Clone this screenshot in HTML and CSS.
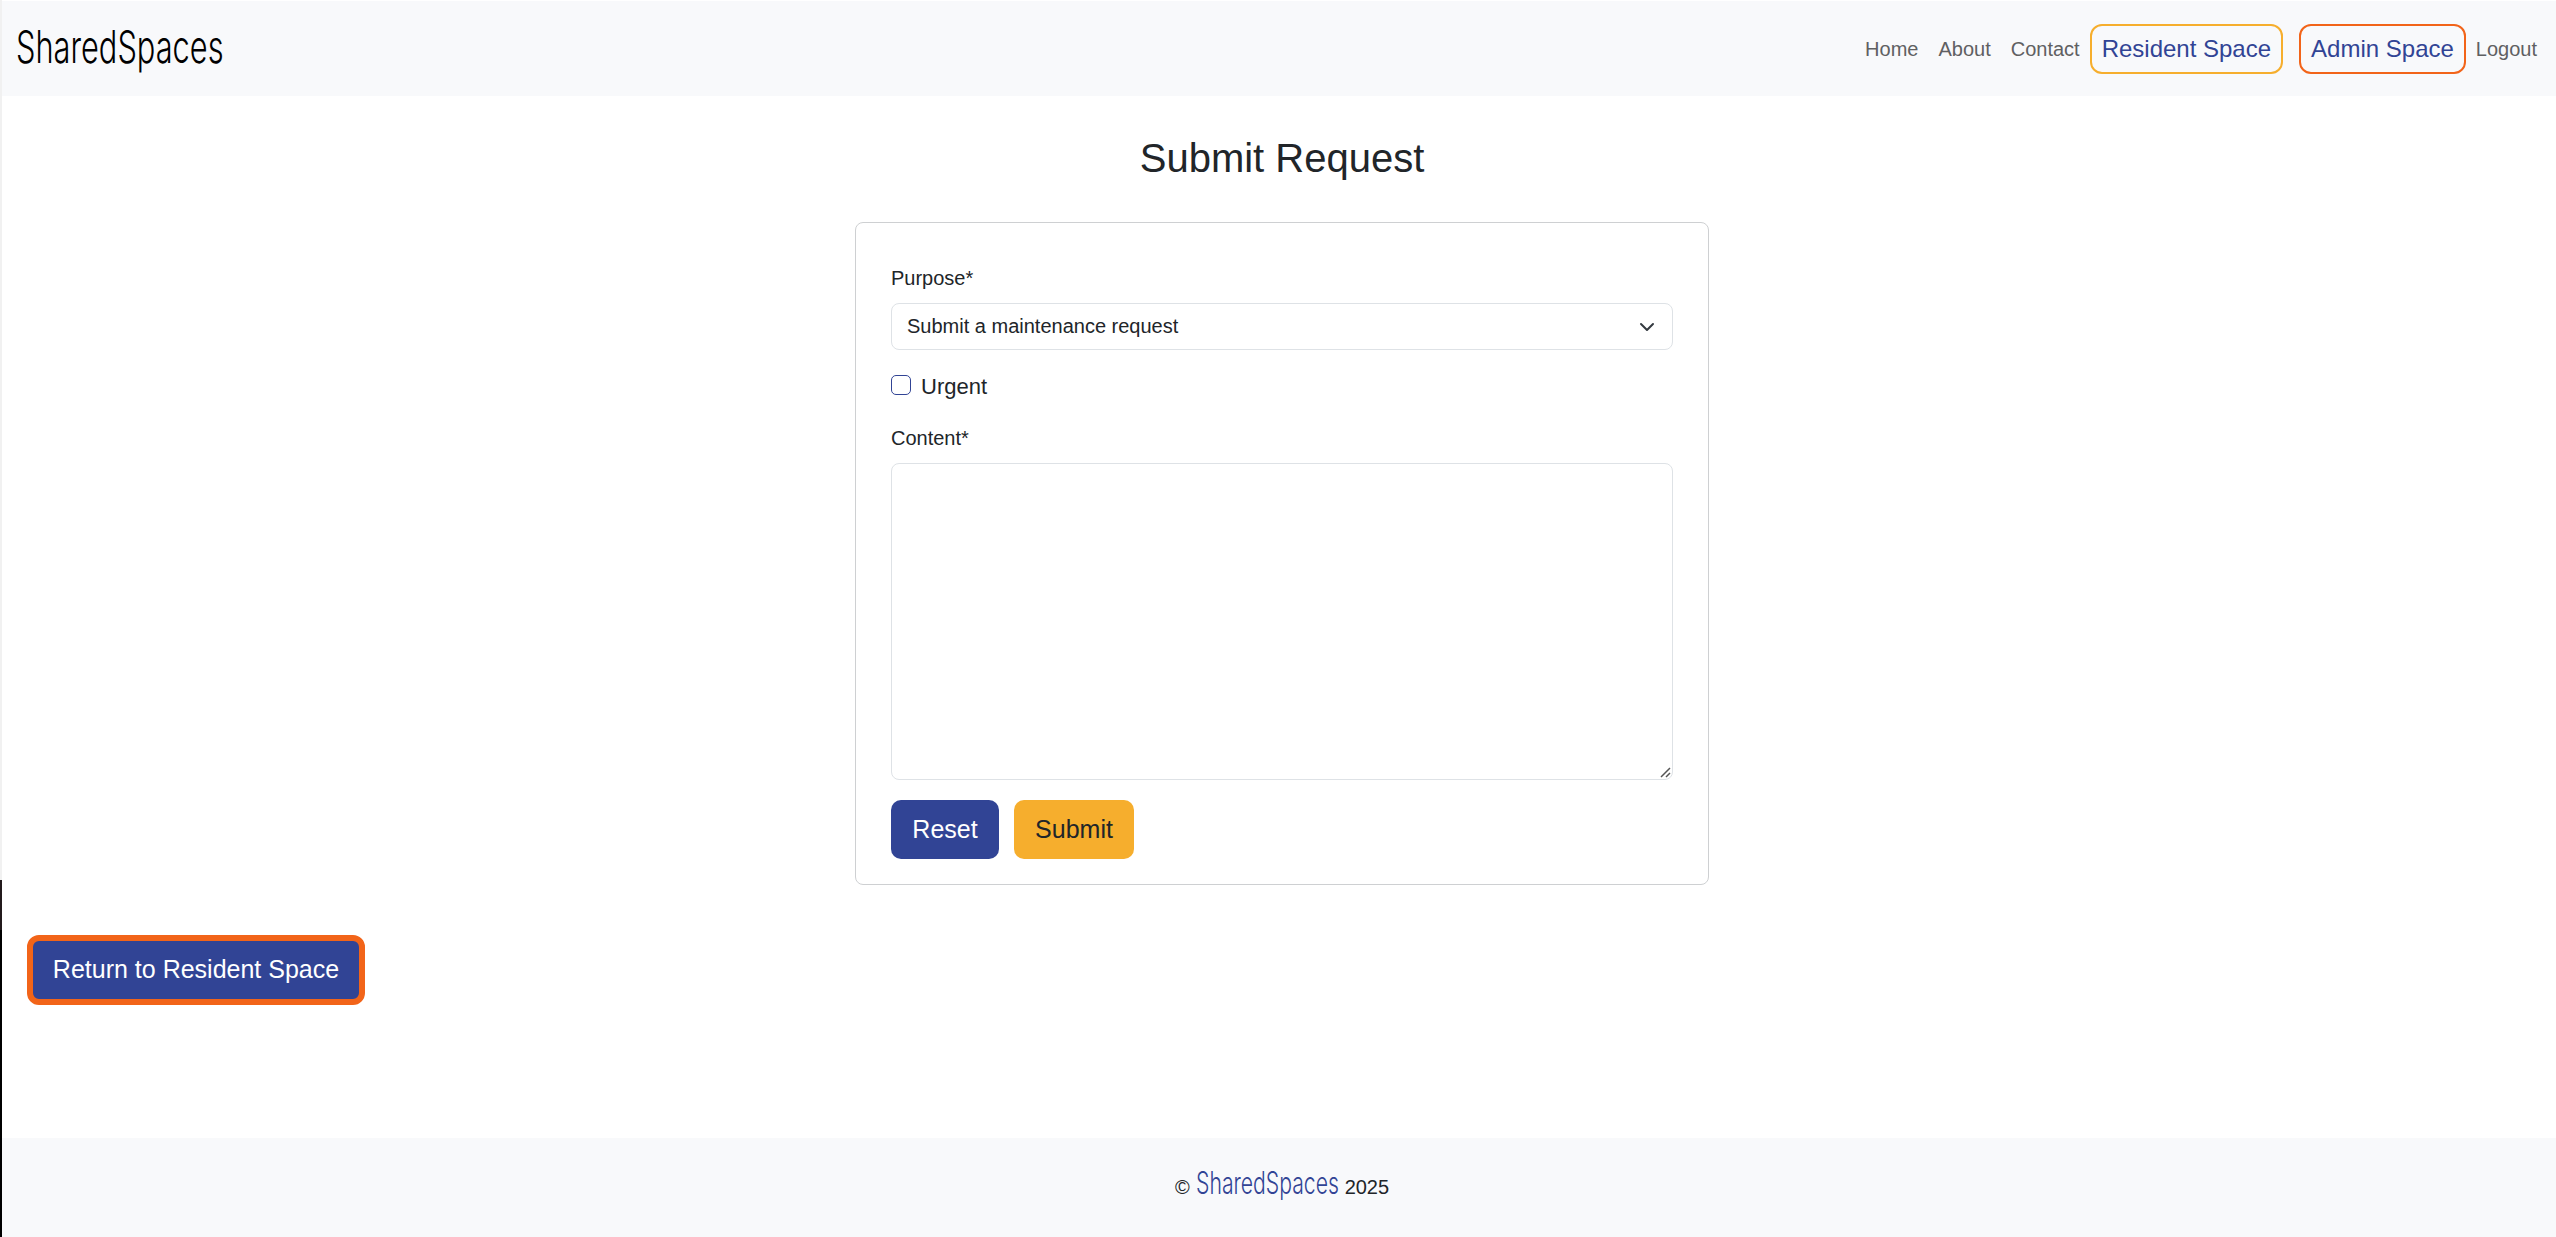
FILE: index.html
```html
<!DOCTYPE html>
<html lang="en">
<head>
<meta charset="utf-8">
<title>Submit Request - SharedSpaces</title>
<link rel="stylesheet" href="styles.css">
</head>
<body>
<div class="page">
  <header class="navbar">
    <a class="brand" href="#"><span class="wordmark">SharedSpaces</span></a>
    <nav class="nav">
      <a class="nav-link" href="#">Home</a>
      <a class="nav-link" href="#">About</a>
      <a class="nav-link" href="#">Contact</a>
      <a class="space-link resident" href="#">Resident Space</a>
      <a class="space-link admin" href="#">Admin Space</a>
      <a class="nav-link" href="#">Logout</a>
    </nav>
  </header>
  <main class="main">
    <h1 class="title">Submit Request</h1>
    <form class="card">
      <label class="label" for="purpose">Purpose*</label>
      <div class="select-wrap">
        <select class="select" id="purpose"><option>Submit a maintenance request</option></select>
        <svg class="chevron" width="16" height="16" viewBox="0 0 16 16"><path d="m2 5 6 6 6-6"/></svg>
      </div>
      <div class="check">
        <input class="check-input" type="checkbox" id="urgent">
        <label class="check-label" for="urgent">Urgent</label>
      </div>
      <label class="label" for="content">Content*</label>
      <div class="textarea-wrap">
        <textarea class="textarea" id="content"></textarea>
        <svg class="grip" width="11" height="11" viewBox="0 0 11 11"><path d="M1 10 10 1M6 10l4-4"/></svg>
      </div>
      <div class="actions">
        <button class="btn btn-blue" type="reset">Reset</button>
        <button class="btn btn-gold" type="button">Submit</button>
      </div>
    </form>
    <a class="return" href="#">Return to Resident Space</a>
  </main>
  <footer class="footer">
    <span>©</span>
    <span class="footer-brand"><span class="wordmark">SharedSpaces</span></span>
    <span>2025</span>
  </footer>
</div>
</body>
</html>
```
FILE: styles.css
```css
* { box-sizing: border-box; }

html {
  height: 100%;
  overflow: hidden;
  background: #fff;
}

body {
  margin: 0;
  height: 100%;
  overflow: hidden;
  padding: 1px 0 0 2px;
  background: linear-gradient(#f1f1f1 880px, #231a1c 880px, #231a1c 930px, #000 930px) 0 0 / 2px 100% no-repeat;
  color: #212529;
  font: 20px/1.5 "Liberation Sans", Arial, sans-serif;
}

a { text-decoration: none; }

.page {
  display: flex;
  flex-direction: column;
  width: 2560px;
  height: 100%;
}

.navbar {
  display: flex;
  align-items: center;
  justify-content: space-between;
  height: 95px;
  padding: 0 15px 0 14px;
  background: #f8f9fb;
}

.wordmark {
  display: inline-block;
  font-family: Inter, Roboto, sans-serif;
  font-weight: 300;
  transform: scaleX(.684);
  transform-origin: 0 50%;
}

.brand {
  width: 208px;
  padding-bottom: 2px;
  color: #000;
  font-size: 45px;
  line-height: 62px;
}

.footer-brand {
  width: 143px;
  color: #314495;
  font-size: 31px;
  line-height: 40px;
}

.nav { display: flex; align-items: center; }
.nav-link { padding: 0 10px; color: #5f6062; }

.space-link {
  padding: 5px 10px;
  border: 2px solid;
  border-radius: 12px;
  color: #314495;
  font-size: 24px;
}

.resident { border-color: #f6ae2d; margin-right: 16px; }
.admin { border-color: #f26419; }

.main {
  display: flex;
  flex: 1;
  flex-direction: column;
  align-items: center;
}

.title {
  margin: 36px 0 38px;
  font-size: 40px;
  font-weight: 400;
  line-height: 52px;
}

.card {
  display: flex;
  flex-direction: column;
  width: 854px;
  height: 663px;
  padding: 40px 35px 0;
  border: 1px solid #ced0d2;
  border-radius: 8px;
}

.label { height: 40px; }

.select-wrap {
  display: grid;
  align-items: center;
  margin-bottom: 20px;
}

.select, .chevron, .textarea, .grip { grid-area: 1 / 1; }

.select {
  appearance: none;
  width: 100%;
  height: 47px;
  padding: 0 15px 2px;
  border: 1px solid #dee2e6;
  border-radius: 8px;
  background: #fff;
  color: #212529;
  font: inherit;
}

.chevron {
  justify-self: end;
  margin-right: 18px;
  fill: none;
  stroke: #343a40;
  stroke-width: 2;
  stroke-linecap: round;
  stroke-linejoin: round;
  pointer-events: none;
}

.check {
  display: flex;
  gap: 10px;
  height: 53px;
}

.check-input {
  appearance: none;
  width: 20px;
  height: 20px;
  margin: 5px 0 0;
  border: 1px solid #314495;
  border-radius: 5px;
}

.check-label { font-size: 22px; line-height: 33px; }

.textarea-wrap { display: grid; }

.textarea {
  height: 317px;
  margin: 0;
  border: 1px solid #dee2e6;
  border-radius: 8px;
  background: #fff;
  font: inherit;
  resize: none;
}

.grip {
  place-self: end;
  margin: 0 2px 2px 0;
  fill: none;
  stroke: #555;
  stroke-width: 1.5;
  pointer-events: none;
}

.actions {
  display: flex;
  gap: 15px;
  margin-top: 20px;
}

.btn {
  height: 59px;
  padding: 0 21px;
  border: 0;
  border-radius: 10px;
  font: 25px/1.5 "Liberation Sans", Arial, sans-serif;
}

.btn-blue { width: 108px; background: #314495; color: #fff; }
.btn-gold { width: 120px; background: #f6ae2d; color: #212529; }

.return {
  align-self: flex-start;
  width: 338px;
  height: 70px;
  margin: 50px 0 0 25px;
  border: 6px solid #f26419;
  border-radius: 12px;
  background: #314495;
  color: #fff;
  font-size: 25px;
  line-height: 56px;
  text-align: center;
}

.footer {
  display: flex;
  justify-content: center;
  gap: 6px;
  height: 99px;
  padding-top: 25px;
  background: #f8f9fb;
  line-height: 48px;
}
```
